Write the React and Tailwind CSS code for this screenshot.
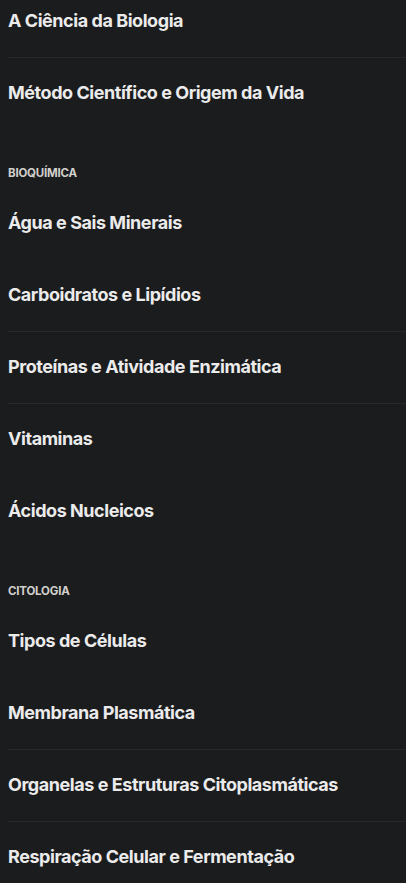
const sections = [
  {
    title: null,
    items: [
      { name: 'A Ciência da Biologia' },
      { name: 'Método Científico e Origem da Vida', divider: true },
    ],
  },
  {
    title: 'Bioquímica',
    items: [
      { name: 'Água e Sais Minerais' },
      { name: 'Carboidratos e Lipídios' },
      { name: 'Proteínas e Atividade Enzimática', divider: true },
      { name: 'Vitaminas', divider: true },
      { name: 'Ácidos Nucleicos' },
    ],
  },
  {
    title: 'Citologia',
    items: [
      { name: 'Tipos de Células' },
      { name: 'Membrana Plasmática' },
      { name: 'Organelas e Estruturas Citoplasmáticas', divider: true },
      { name: 'Respiração Celular e Fermentação', divider: true },
    ],
  },
];

export default function App() {
  return (
    <div
      className="min-h-screen bg-[#1b1c1e] overflow-hidden"
      style={{ fontFamily: 'Inter, "Noto Sans", sans-serif' }}
    >
      <div className="-mt-[15px] pl-2">
        {sections.map((section, i) => (
          <div key={i}>
            {/* Section label */}
            {section.title && (
              <div className="h-[58px] pt-[37px] text-[11.5px] leading-[14px] font-bold uppercase text-[#d2d0cc] tracking-[-0.2px]">
                {section.title}
              </div>
            )}
            {section.items.map((item) => (
              <div
                key={item.name}
                className={
                  'h-[72px] flex items-center pr-4 pb-[3px] ' +
                  (item.divider ? 'border-t border-[#27282b]' : 'border-t border-transparent')
                }
              >
                <span className="text-[18px] font-bold text-[#ebebeb] tracking-[-0.45px]">
                  {item.name}
                </span>
              </div>
            ))}
          </div>
        ))}
      </div>
    </div>
  );
}
